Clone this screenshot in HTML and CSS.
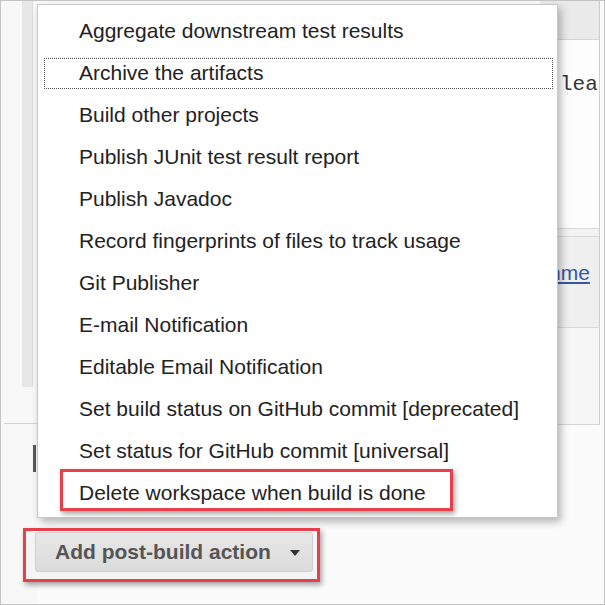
FILE: index.html
```html
<!DOCTYPE html>
<html>
<head>
<meta charset="utf-8">
<link rel="stylesheet" href="styles.css">
</head>
<body>
<div class="frame">
  <div class="gutter">
    <div class="strip"></div>
    <div class="gutter-rule"></div>
    <div class="text-caret"></div>
  </div>
  <div class="content">
    <div class="upper">
      <div class="under"></div>
      <div class="side">
        <div class="side-head"></div>
        <div class="side-code"><code>lea</code></div>
        <div class="side-sep"></div>
        <div class="side-link"><a href="#">nme</a></div>
        <div class="side-blank"></div>
      </div>
    </div>
    <div class="actions">
      <div class="mark-button">
        <button class="add-btn" type="button">Add post-build action <span class="tri"></span></button>
      </div>
    </div>
  </div>
  <ul class="menu">
    <li class="item">Aggregate downstream test results</li>
    <li class="item focused">Archive the artifacts</li>
    <li class="item">Build other projects</li>
    <li class="item">Publish JUnit test result report</li>
    <li class="item">Publish Javadoc</li>
    <li class="item">Record fingerprints of files to track usage</li>
    <li class="item">Git Publisher</li>
    <li class="item">E-mail Notification</li>
    <li class="item">Editable Email Notification</li>
    <li class="item">Set build status on GitHub commit [deprecated]</li>
    <li class="item">Set status for GitHub commit [universal]</li>
    <li class="item marked"><span class="mark-item">Delete workspace when build is done</span></li>
  </ul>
</div>
</body>
</html>
```

FILE: styles.css
```css
* { box-sizing: border-box; }
html, body { margin: 0; padding: 0; background: #fff; }
body { font-family: "Liberation Sans", Arial, sans-serif; }

.frame {
  position: relative;
  width: 605px;
  height: 605px;
  border: 1px solid #c4c4c4;
  background: #fbfbfb;
  display: flex;
  overflow: hidden;
}

/* left gutter */
.gutter {
  width: 36px;
  flex: none;
  display: flex;
  flex-direction: column;
  background: #f8f8f8;
}
.strip {
  margin-left: 21px;
  width: 11px;
  height: 386px;
  background: #e7e7e7;
  border-right: 1px solid #dcdcdc;
}
.gutter-rule {
  margin: 36px 0 0 3px;
  height: 1px;
  background: #d2d2d2;
}
.text-caret {
  margin: 21px 0 0 32px;
  width: 3px;
  height: 27px;
  background: #585858;
}

/* main content */
.content {
  flex: 1;
  display: flex;
  flex-direction: column;
}
.upper {
  display: flex;
  height: 424px;
}
.under { flex: 1; }
.side {
  width: 60px;
  margin-right: 4px;
  border-right: 1px solid #cdcdcd;
  display: flex;
  flex-direction: column;
}
.side-head {
  height: 39px;
  background: #eaeaea;
  border-bottom: 1px solid #d4d4d4;
}
.side-code {
  height: 188px;
  background: #fdfdfd;
  padding: 33px 0 0 20px;
  white-space: nowrap;
}
.side-code code {
  font-family: "Liberation Mono", "Courier New", monospace;
  font-size: 21px;
  line-height: 24px;
  color: #333;
}
.side-sep {
  height: 9px;
  background: #f3f3f3;
  border-top: 1px solid #d8d8d8;
  border-bottom: 1px solid #d8d8d8;
}
.side-link {
  height: 91px;
  background: #efefef;
  border-bottom: 1px solid #d8d8d8;
  padding: 24px 0 0 9px;
  white-space: nowrap;
}
.side-link a {
  font-size: 21px;
  line-height: 24px;
  color: #3557a6;
  text-decoration: underline;
}
.side-blank {
  flex: 1;
  background: #f6f6f6;
  border-bottom: 1px solid #d6d6d6;
}

.actions {
  padding-top: 103px;
  display: flex;
}
.mark-button {
  margin-left: -14px;
  width: 297px;
  height: 54px;
  border: 3px solid #e8404a;
  padding: 1px 4px 7px 9px;
  box-shadow: 2px 3px 5px rgba(0,0,0,0.35);
  background: #f4f4f4;
}
.add-btn {
  width: 278px;
  height: 40px;
  display: flex;
  align-items: center;
  gap: 19px;
  padding: 0 0 0 19px;
  margin: 0;
  border: 1px solid #cfcfcf;
  border-radius: 3px;
  background: linear-gradient(#e7e7e7, #dbdbdb);
  font-family: "Liberation Sans", Arial, sans-serif;
  font-weight: bold;
  font-size: 21px;
  color: #555;
}
.tri {
  width: 0;
  height: 0;
  border-left: 5px solid transparent;
  border-right: 5px solid transparent;
  border-top: 6px solid #333;
  margin-top: 2px;
}

/* dropdown menu */
.menu {
  position: absolute;
  left: 36px;
  top: 3px;
  width: 521px;
  margin: 0;
  padding: 5px 0 3px;
  list-style: none;
  background: #fff;
  border: 1px solid #c8c8c8;
  box-shadow: 3px 4px 8px rgba(0,0,0,0.28);
}
.item {
  position: relative;
  height: 42px;
  display: flex;
  align-items: center;
  padding-left: 41px;
  font-size: 21px;
  color: #222;
  white-space: nowrap;
}
.item.focused::after {
  content: "";
  position: absolute;
  left: 6px;
  right: 4px;
  top: 6px;
  bottom: 5px;
  border: 1px dotted #555;
}
.item.marked { align-items: flex-start; }
.mark-item {
  display: flex;
  align-items: center;
  height: 42px;
  width: 393px;
  margin: -3px 0 0 -19px;
  border: 3px solid #e8404a;
  padding: 6px 0 0 16px;
  box-shadow: 2px 3px 5px rgba(0,0,0,0.35);
  background: #fff;
}
```
